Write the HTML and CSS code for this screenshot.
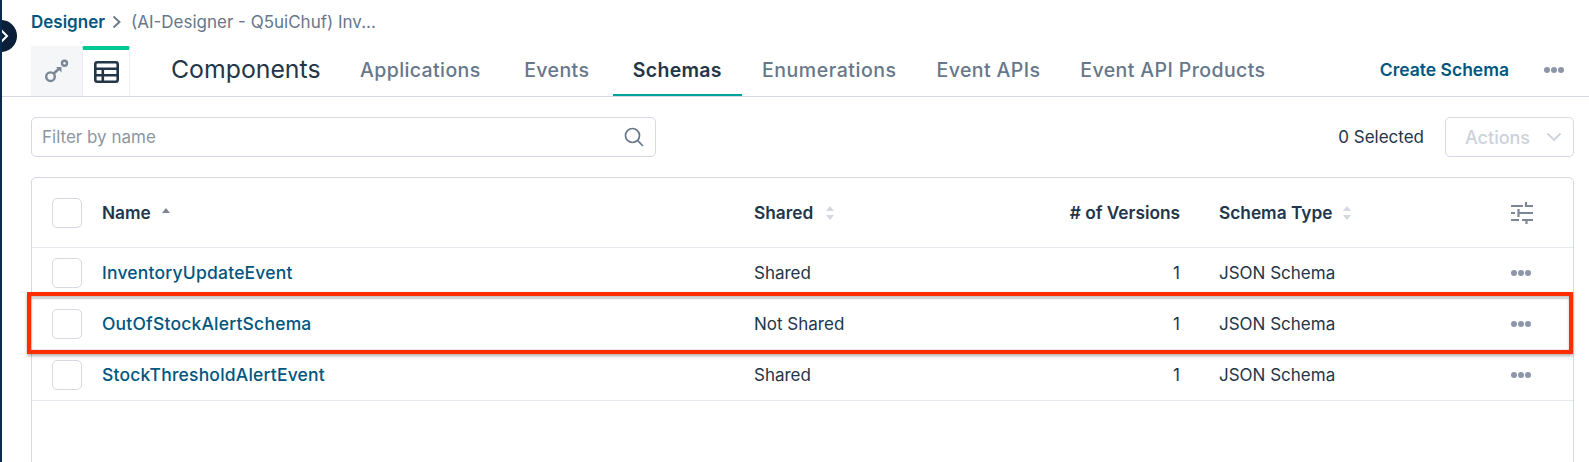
FILE: index.html
```html
<!DOCTYPE html>
<html lang="en">
<head>
    <meta charset="UTF-8">
    <title>Schemas</title>
    <link rel="stylesheet" href="styles.css">
</head>
<body>
    <div class="side-toggle">
        <svg width="10" height="16" viewBox="0 0 10 16"><path d="M1.500 1.500L8 8l-6.500 6.500" fill="none" stroke="#fff" stroke-width="2"/></svg>
    </div>

    <div class="breadcrumb">
        <a class="crumb-link">Designer</a>
        <svg class="crumb-sep" width="10" height="14" viewBox="0 0 10 14"><path d="M1.500 1.500L7.500 7l-6 5.500" fill="none" stroke="#67778a" stroke-width="1.800"/></svg>
        <span class="crumb-current">(AI-Designer - Q5uiChuf) Inv...</span>
    </div>

    <div class="topbar">
        <div class="view-tab">
            <svg width="26" height="26" viewBox="0 0 26 26" fill="none" stroke="#7b8796" stroke-width="2.400">
                <circle cx="6.500" cy="18.700" r="4.300"/>
                <path d="M9.500 15.700l6-5.500" stroke-width="2.600"/>
                <path d="M12 9h5.500v5.500z" fill="#7b8796" stroke="none"/>
                <circle cx="20.500" cy="5.300" r="2.500"/>
            </svg>
        </div>
        <div class="view-tab view-tab-active">
            <svg width="25" height="22" viewBox="0 0 25 22" fill="none" stroke="#233549" stroke-width="2.600">
                <rect x="1.300" y="1.300" width="22.400" height="19.400" rx="2"/>
                <path d="M1.300 7.700h22.400M1.300 14.300h22.400M8.800 7.700V21"/>
            </svg>
        </div>
        <div class="page-title">Components</div>
        <nav class="tabs">
            <a class="tab">Applications</a>
            <a class="tab">Events</a>
            <a class="tab active">Schemas</a>
            <a class="tab tab-wide">Enumerations</a>
            <a class="tab">Event APIs</a>
            <a class="tab">Event API Products</a>
        </nav>
        <a class="create-link">Create Schema</a>
        <div class="dots dots-top"><i></i><i></i><i></i></div>
    </div>

    <div class="toolbar">
        <div class="filter">
            <span class="filter-text">Filter by name</span>
            <svg width="22" height="22" viewBox="0 0 22 22" fill="none" stroke="#67778a" stroke-width="1.700">
                <circle cx="9.500" cy="9.500" r="7"/>
                <path d="M14.700 14.700l5.300 5.300"/>
            </svg>
        </div>
        <div class="selected">0 Selected</div>
        <div class="actions">
            <span>Actions</span>
            <svg width="16" height="10" viewBox="0 0 16 10"><path d="M1.500 1.500L8 8l6.500-6.500" fill="none" stroke="#cdd2db" stroke-width="1.800"/></svg>
        </div>
    </div>

    <div class="table">
        <div class="row head">
            <div class="cell-check"><span class="checkbox"></span></div>
            <div class="cell-name">Name<svg class="sort-one" width="8" height="5" viewBox="0 0 8 5"><path d="M4 0l4 5H0z" fill="#7b8796"/></svg></div>
            <div class="cell-shared">Shared<svg class="sort" width="8" height="14" viewBox="0 0 8 14"><path d="M4 0l4 5H0zM4 14L0 9h8z" fill="#d3d7df"/></svg></div>
            <div class="cell-versions"># of Versions</div>
            <div class="cell-type">Schema Type<svg class="sort" width="8" height="14" viewBox="0 0 8 14"><path d="M4 0l4 5H0zM4 14L0 9h8z" fill="#d3d7df"/></svg></div>
            <div class="cell-more">
                <svg width="22" height="22" viewBox="0 0 22 22" fill="none" stroke="#7b8796" stroke-width="2.200">
                    <path d="M0 4h12M15 4h7M15 0v5M0 11h4M7.500 11H22M7.500 7v8M0 18h8M11 18h11M15.500 17v5"/>
                </svg>
            </div>
        </div>
        <div class="row">
            <div class="cell-check"><span class="checkbox"></span></div>
            <div class="cell-name"><a>InventoryUpdateEvent</a></div>
            <div class="cell-shared">Shared</div>
            <div class="cell-versions">1</div>
            <div class="cell-type">JSON Schema</div>
            <div class="cell-more"><div class="dots"><i></i><i></i><i></i></div></div>
        </div>
        <div class="row">
            <div class="cell-check"><span class="checkbox"></span></div>
            <div class="cell-name"><a>OutOfStockAlertSchema</a></div>
            <div class="cell-shared">Not Shared</div>
            <div class="cell-versions">1</div>
            <div class="cell-type">JSON Schema</div>
            <div class="cell-more"><div class="dots"><i></i><i></i><i></i></div></div>
            <div class="highlight"></div>
        </div>
        <div class="row">
            <div class="cell-check"><span class="checkbox"></span></div>
            <div class="cell-name"><a>StockThresholdAlertEvent</a></div>
            <div class="cell-shared">Shared</div>
            <div class="cell-versions">1</div>
            <div class="cell-type">JSON Schema</div>
            <div class="cell-more"><div class="dots"><i></i><i></i><i></i></div></div>
        </div>
    </div>
</body>
</html>
```

FILE: styles.css
```css
html {
    height: 100%;
    overflow: hidden;
}

body {
    margin: 0;
    height: 462px;
    overflow: hidden;
    background-color: #ffffff;
    border-left: 2px solid #0b2a4a;
    box-sizing: border-box;
    font-family: Inter, "Noto Sans", sans-serif;
    color: #233549;
    position: relative;
}

.side-toggle {
    position: absolute;
    left: -17px;
    top: 20px;
    width: 32px;
    height: 32px;
    border-radius: 50%;
    background-color: #0b2038;
    display: flex;
    align-items: center;
    justify-content: flex-end;
    padding-right: 8px;
    box-sizing: border-box;
}

.breadcrumb {
    height: 46px;
    padding: 0 0 3px 29px;
    display: flex;
    align-items: center;
    font-size: 17px;
    box-sizing: border-box;
}

.crumb-link {
    color: #00567f;
    font-weight: 600;
}

.crumb-sep {
    margin: 0 9px 0 7px;
}

.crumb-current {
    color: #67778a;
}

.topbar {
    height: 51px;
    display: flex;
    align-items: stretch;
    padding-left: 29px;
    border-bottom: 1px solid #d5d9e2;
    box-sizing: border-box;
}

.view-tab {
    width: 51px;
    background-color: #f5f6f8;
    display: flex;
    align-items: center;
    justify-content: center;
    box-sizing: border-box;
}

.view-tab-active {
    width: 48px;
    background-color: #ffffff;
    border-top: 4px solid #00c895;
    border-left: 1px solid #eceef2;
    border-right: 1px solid #eceef2;
    border-radius: 2px 2px 0 0;
    padding-bottom: 2px;
}

.page-title {
    font-size: 24.800px;
    line-height: 46px;
    margin-left: 41px;
    width: 169px;
}

.tabs {
    display: flex;
}

.tab {
    font-size: 19.500px;
    font-weight: 500;
    letter-spacing: 0.4px;
    color: #67778a;
    line-height: 48px;
    padding: 0 20px;
    box-sizing: border-box;
}

.tab:nth-child(-n+2) {
    margin-right: 3.500px;
}

.tab-wide {
    letter-spacing: 0.55px;
}

.tab.active {
    color: #233549;
    font-weight: 600;
    letter-spacing: 0.3px;
    border-bottom: 2px solid #00a3a0;
}

.create-link {
    margin-left: auto;
    color: #00567f;
    font-weight: 600;
    font-size: 17.500px;
    line-height: 48px;
}

.dots {
    display: flex;
    gap: 1px;
    align-items: center;
}

.dots i {
    width: 6px;
    height: 6px;
    border-radius: 50%;
    background-color: #8c96a8;
}

.dots-top {
    margin: 0 25px 0 35px;
    padding-bottom: 2px;
}

.toolbar {
    height: 80px;
    padding: 20px 15px 0 29px;
    display: flex;
    box-sizing: border-box;
    align-items: flex-start;
}

.filter {
    width: 625px;
    height: 40px;
    border: 1px solid #d5d9e2;
    border-radius: 5px;
    box-sizing: border-box;
    display: flex;
    align-items: center;
    justify-content: space-between;
    padding: 0 10px;
}

.filter-text {
    font-size: 17px;
    color: #8c96a3;
}

.selected {
    margin-left: auto;
    font-size: 17px;
    line-height: 40px;
}

.actions {
    width: 129px;
    height: 40px;
    margin-left: 21px;
    border: 1px solid #d5d9e2;
    border-radius: 5px;
    box-sizing: border-box;
    display: flex;
    align-items: center;
    justify-content: space-between;
    padding: 0 11px 0 19px;
    color: #cdd2db;
    font-size: 18px;
    font-weight: 500;
}

.table {
    margin: 0 15px 0 29px;
    height: 320px;
    border: 1px solid #d5d9e2;
    border-radius: 5px;
    box-sizing: border-box;
}

.row {
    display: grid;
    grid-template-columns: 70px 652px 200px 226px 310px 82px;
    height: 51px;
    align-items: center;
    border-bottom: 1px solid #e8eaef;
    box-sizing: border-box;
    font-size: 17px;
    position: relative;
}

.row.head {
    height: 70px;
    font-weight: 600;
    font-size: 17.300px;
}

.cell-check {
    padding-left: 20px;
    display: flex;
}

.checkbox {
    width: 30px;
    height: 30px;
    border: 1px solid #d5d9e2;
    border-radius: 5px;
    box-sizing: border-box;
}

.cell-name a {
    display: block;
    padding-bottom: 2px;
    color: #00567f;
    font-weight: 500;
    font-size: 17.500px;
    letter-spacing: 0.2px;
}

.sort-one {
    margin: 0 0 6px 11px;
}

.sort {
    margin-left: 11px;
    vertical-align: -1px;
}

.cell-shared .sort {
    margin-left: 13px;
}

.cell-versions {
    text-align: right;
}

.cell-type {
    padding-left: 39px;
}

.cell-more {
    display: flex;
    margin-left: 21px;
}

.highlight {
    position: absolute;
    left: -5px;
    right: 0;
    top: -7px;
    bottom: -5px;
    border: 4px solid #ff2d00;
    box-shadow: 0 2px 3px rgba(0, 0, 0, 0.3), inset 0 2px 3px rgba(0, 0, 0, 0.25);
}
```
